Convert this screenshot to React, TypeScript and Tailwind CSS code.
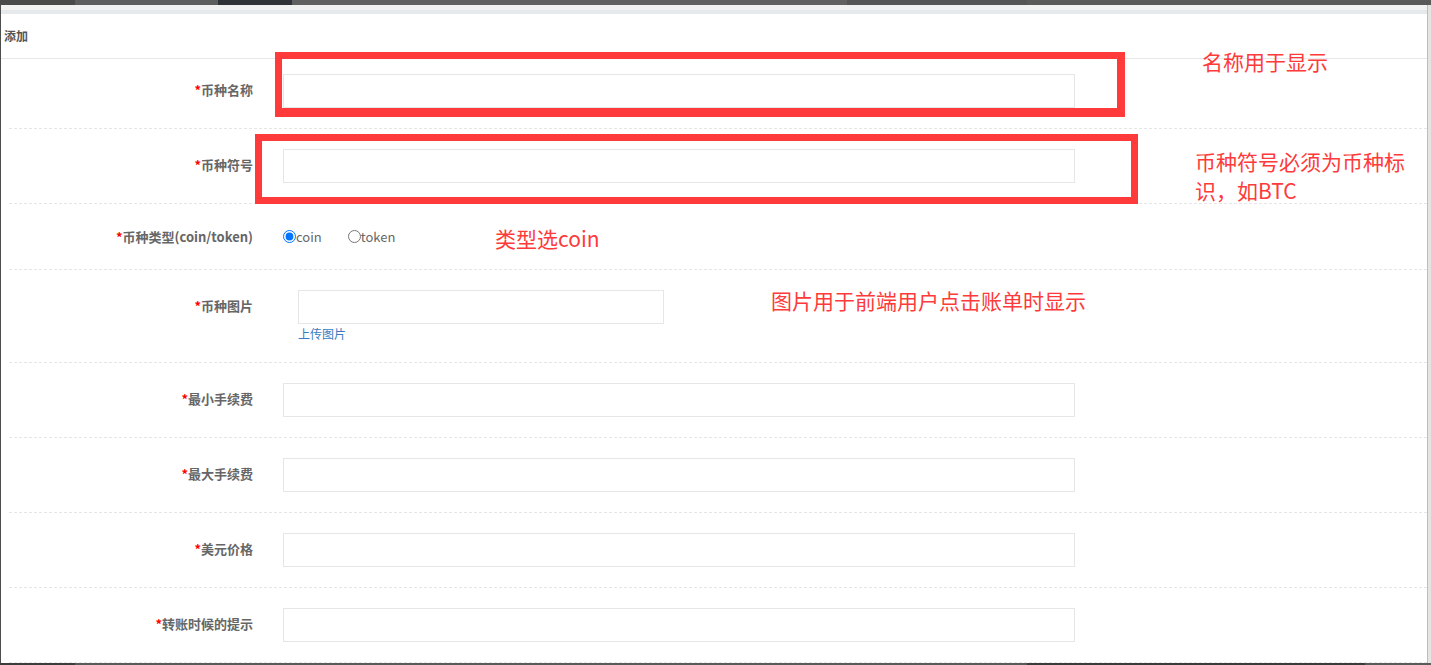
import React from "react";

const CJK = { fontFamily: '"Noto Sans CJK SC", "Noto Sans", sans-serif' };

function Label({ text }: { text: string }) {
  return (
    <div className="w-[244px] shrink-0 h-[34px] pb-[3px] flex items-center justify-end text-[13px] font-bold text-[#666] leading-none">
      <span className="text-[#ff0000]">*</span>
      {text}
    </div>
  );
}

function InputRow({ label, first }: { label: string; first?: boolean }) {
  return (
    <div
      className={`flex items-start gap-[30px] border-b border-dashed border-[#e6e6e6] ${
        first ? "pt-[15px] h-[70px]" : "pt-[20px] h-[75px]"
      }`}
    >
      <Label text={label} />
      <div className="w-[792px] h-[34px] border border-[#e6e6e6] bg-white" />
    </div>
  );
}

export default function App() {
  return (
    <div className="w-[1431px] h-[665px] bg-[#5c5c5c] flex flex-col overflow-hidden relative" style={CJK}>
      {/* background strip top */}
      <div className="h-[5px] flex shrink-0">
        <div className="w-[75px] bg-[#4a4a4a]" />
        <div className="w-[143px] bg-[#5e5e5e]" />
        <div className="w-[74px] bg-[#2f3236]" />
        <div className="w-[555px] bg-[#616161]" />
        <div className="w-[180px] bg-[#555555]" />
        <div className="flex-1 bg-[#5a5a5a]" />
      </div>

      <div className="flex flex-1 min-h-0">
        <div className="w-px bg-[#4d4d4d]" />
        <div className="w-[1426px] bg-white flex flex-col">
          <div className="h-[5px] bg-[#f2f2f2]" />
          <div className="h-[4px] bg-[#e6e9ec]" />
          <div className="h-[45px] border-b border-[#e8e8e8] flex items-center px-[3px] text-[12px] font-bold text-[#555]">
            添加
          </div>
          <div className="pl-[8px] flex flex-col">
            <InputRow label="币种名称" first />
            <InputRow label="币种符号" />
            <div className="h-[66px] pt-[20px] flex items-start gap-[30px] border-b border-dashed border-[#e6e6e6]">
              <div className="w-[244px] shrink-0 h-[25px] pb-[1px] flex items-center justify-end text-[13px] font-bold text-[#666] leading-none">
                <span className="text-[#ff0000]">*</span>
                币种类型(coin/token)
              </div>
              <div className="h-[25px] flex items-center text-[13px] text-[#666]">
                <label className="flex items-center">
                  <input type="radio" name="t" defaultChecked className="w-[13px] h-[13px] m-0" />
                  <span>coin</span>
                </label>
                <label className="flex items-center ml-[26px]">
                  <input type="radio" name="t" className="w-[13px] h-[13px] m-0" />
                  <span>token</span>
                </label>
              </div>
            </div>
            <div className="h-[93px] pt-[20px] flex items-start gap-[30px] border-b border-dashed border-[#e6e6e6]">
              <Label text="币种图片" />
              <div className="ml-[15px] flex flex-col">
                <div className="w-[366px] h-[34px] border border-[#e6e6e6]" />
                <div className="h-[18px] pt-[2px] flex items-center text-[12px] text-[#3a7bbf] leading-none">上传图片</div>
              </div>
            </div>
            <InputRow label="最小手续费" />
            <InputRow label="最大手续费" />
            <InputRow label="美元价格" />
            <InputRow label="转账时候的提示" />
          </div>
        </div>
        <div className="w-px bg-[#bdbdbd]" />
        <div className="flex-1 bg-[#e4e4e4]" />
      </div>

      <div className="h-[2px] flex shrink-0">
        <div className="w-[75px] bg-[#3c3c3c]" />
        <div className="w-[952px] bg-[#5a5a5a]" />
        <div className="w-[338px] bg-[#3a3a3a]" />
        <div className="flex-1 bg-[#5a5a5a]" />
      </div>

      {/* annotations */}
      <div className="absolute left-[275px] top-[52px] w-[850px] h-[65px] border-[7px] border-b-[9px] border-r-[8px] border-[#fe3a3a]" />
      <div className="absolute left-[255px] top-[134px] w-[883px] h-[70px] border-[7px] border-[#fe3a3a]" />
      <div className="absolute left-[1202px] top-[47px] text-[21px] leading-[28px] text-[#fe3a3a] whitespace-nowrap">名称用于显示</div>
      <div className="absolute left-[1195px] top-[147px] w-[214px] text-[21px] leading-[29px] text-[#fe3a3a]">
        币种符号必须为币种标识，如BTC
      </div>
      <div className="absolute left-[495px] top-[224px] text-[21px] leading-[28px] text-[#fe3a3a] whitespace-nowrap">类型选coin</div>
      <div className="absolute left-[771px] top-[286px] text-[21px] leading-[28px] text-[#fe3a3a] whitespace-nowrap">
        图片用于前端用户点击账单时显示
      </div>
    </div>
  );
}
